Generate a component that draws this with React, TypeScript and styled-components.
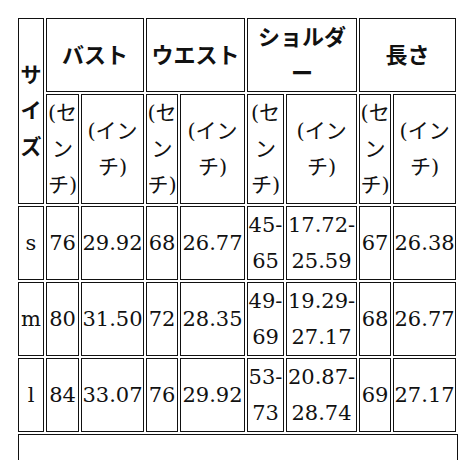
import React from 'react';
import styled, { createGlobalStyle } from 'styled-components';

const GlobalStyle = createGlobalStyle`
  html, body {
    margin: 0;
    padding: 0;
    background: #ffffff;
  }
  body {
    font-family: "DejaVu Serif", "Noto Sans CJK JP", serif;
    color: #111111;
  }
`;

const Page = styled.div`
  padding: 16px 0 0 16px;
  width: 460px;
  height: 460px;
  box-sizing: border-box;
  overflow: hidden;
`;

const SizeTable = styled.table`
  table-layout: fixed;
  width: 442px;
  border-collapse: separate;
  border-spacing: 2px;
  line-break: loose;
  font-family: "DejaVu Serif", "Noto Sans CJK JP", serif;
`;

const Cell = styled.td`
  border: 1px solid #111111;
  padding: 0;
  text-align: center;
  vertical-align: middle;
  line-height: 36px;
  font-size: 21px;
  overflow: hidden;
`;

const HeadCell = styled(Cell)<{ $narrow?: boolean }>`
  font-weight: 700;
  font-size: ${(p) => (p.$narrow ? '21px' : '22px')};
`;

const UnitCell = styled(Cell)`
  font-weight: 400;
`;

const DataCell = styled(Cell)``;

const FooterBox = styled.div`
  margin: 0 0 0 2px;
  width: 440px;
  height: 60px;
  border: 1px solid #111111;
  border-bottom: none;
  box-sizing: border-box;
`;

const widths = [26, 33, 63, 32, 65, 37, 71, 32, 63];

const headers = ['バスト', 'ウエスト', 'ショルダー', '長さ'];

type Row = {
  size: string;
  values: React.ReactNode[];
};

const range = (a: string, b: string) => (
  <>
    {a}
    <wbr />
    {b}
  </>
);

const rows: Row[] = [
  { size: 's', values: ['76', '29.92', '68', '26.77', range('45-', '65'), range('17.72-', '25.59'), '67', '26.38'] },
  { size: 'm', values: ['80', '31.50', '72', '28.35', range('49-', '69'), range('19.29-', '27.17'), '68', '26.77'] },
  { size: 'l', values: ['84', '33.07', '76', '29.92', range('53-', '73'), range('20.87-', '28.74'), '69', '27.17'] },
];

export default function App() {
  return (
    <>
      <GlobalStyle />
      <Page>
        <SizeTable lang="ja">
          <colgroup>
            {widths.map((w, i) => (
              <col key={i} style={{ width: w }} />
            ))}
          </colgroup>
          <tbody>
            <tr>
              <HeadCell as="th" rowSpan={2} $narrow>
                サイズ
              </HeadCell>
              {headers.map((h) => (
                <HeadCell as="th" key={h} colSpan={2}>
                  {h}
                </HeadCell>
              ))}
            </tr>
            <tr>
              {headers.map((h) => (
                <React.Fragment key={h}>
                  <UnitCell>(センチ)</UnitCell>
                  <UnitCell>(インチ)</UnitCell>
                </React.Fragment>
              ))}
            </tr>
            {rows.map((r) => (
              <tr key={r.size}>
                <DataCell>{r.size}</DataCell>
                {r.values.map((v, i) => (
                  <DataCell key={i}>{v}</DataCell>
                ))}
              </tr>
            ))}
          </tbody>
        </SizeTable>
        <FooterBox />
      </Page>
    </>
  );
}
